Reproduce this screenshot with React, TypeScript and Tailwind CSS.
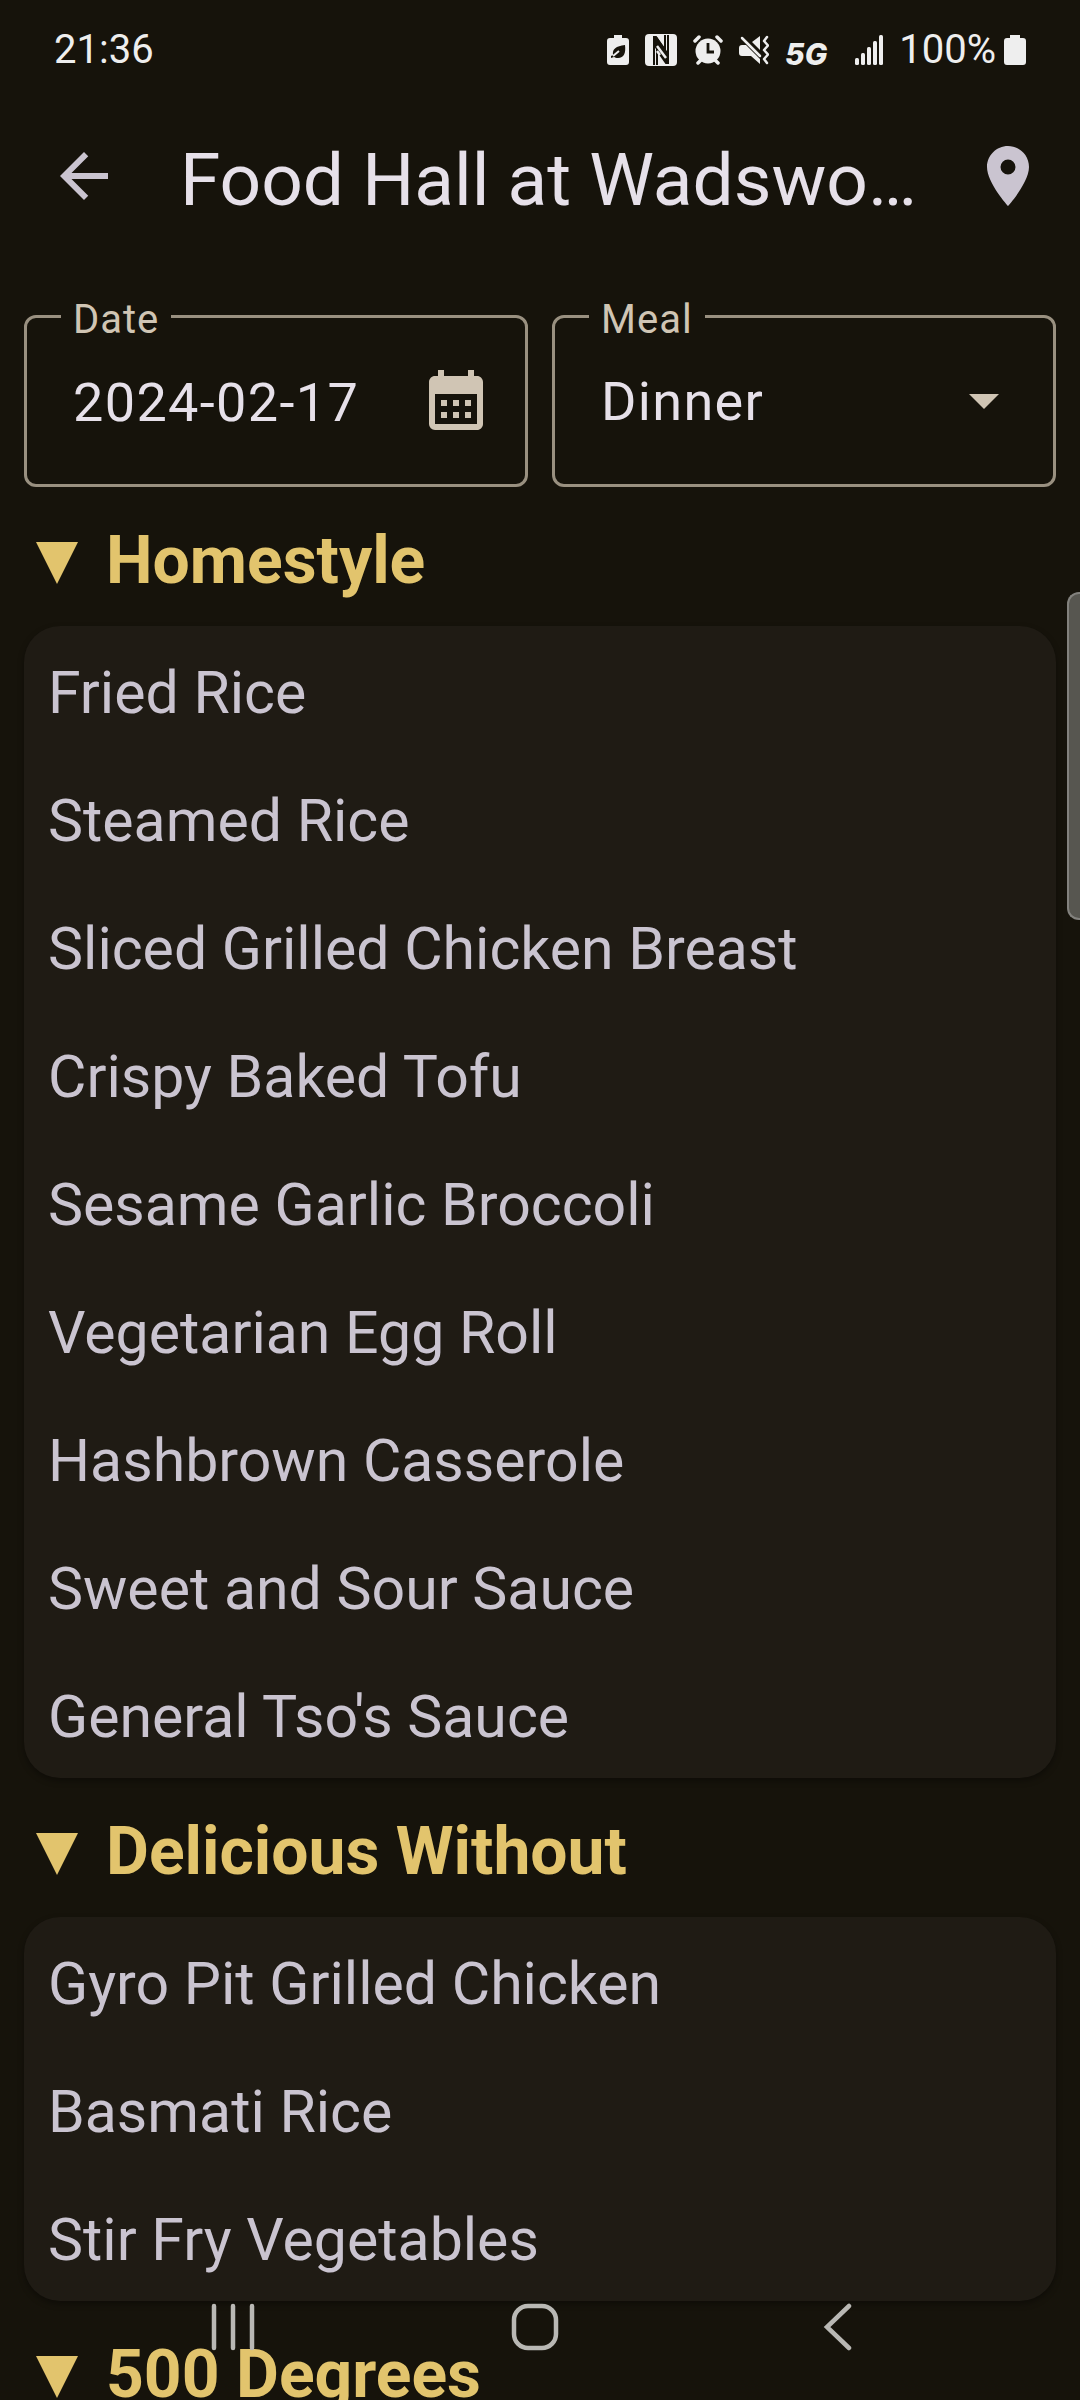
import { useState } from 'react';
import { MdArrowBack, MdArrowDropDown, MdCalendarMonth, MdPlace } from 'react-icons/md';

interface Station {
  name: string;
  items: string[];
}

const stations: Station[] = [
  {
    name: 'Homestyle',
    items: [
      'Fried Rice',
      'Steamed Rice',
      'Sliced Grilled Chicken Breast',
      'Crispy Baked Tofu',
      'Sesame Garlic Broccoli',
      'Vegetarian Egg Roll',
      'Hashbrown Casserole',
      'Sweet and Sour Sauce',
      "General Tso's Sauce",
    ],
  },
  {
    name: 'Delicious Without',
    items: ['Gyro Pit Grilled Chicken', 'Basmati Rice', 'Stir Fry Vegetables'],
  },
  { name: '500 Degrees', items: [] },
];

function StatusBar() {
  return (
    <div className="h-20 shrink-0 flex items-center justify-between pt-5 pl-[54px] pr-[54px] text-[40px] leading-[60px] text-[#eeeeee]">
      <span>21:36</span>
      <div className="flex items-center gap-4">
        {/* Battery saver */}
        <svg width="22" height="32" viewBox="0 0 22 32" fill="currentColor">
          <path d="M7 1h8v3h4a3 3 0 0 1 3 3v21a3 3 0 0 1-3 3H3a3 3 0 0 1-3-3V7a3 3 0 0 1 3-3h4z" />
          <path d="M18 11c1 8-1 13-7 13-2 0-3-.500-4-1l-3 1v-2l2-1c-1-6 3-9 12-10z" fill="#16130b" />
          <path d="M6 22l6-5" stroke="currentColor" strokeWidth="2" />
        </svg>
        {/* NFC */}
        <svg width="32" height="32" viewBox="0 0 32 32" fill="currentColor">
          <rect x="0" y="0" width="32" height="32" rx="4" />
          <path d="M9 31V3h2l9 13V1M23 1v28h-2l-9-13v15" fill="none" stroke="#16130b" strokeWidth="2" />
          <path d="M8 3h4l12 17v9h-3L8 11z" fill="#16130b" />
          <path d="M12 12l9 12M12 17l3 4" stroke="currentColor" strokeWidth="2.500" />
        </svg>
        {/* Alarm */}
        <svg width="30" height="30" viewBox="0 0 30 30" fill="currentColor">
          <circle cx="15" cy="16" r="12.500" />
          <path d="M2 6l4-4M28 6l-4-4M5 28l4-4M25 28l-4-4" stroke="currentColor" strokeWidth="3.500" strokeLinecap="round" />
          <path d="M15 8v9h6" fill="none" stroke="#16130b" strokeWidth="2.800" />
        </svg>
        {/* Muted, vibrate */}
        <svg width="30" height="30" viewBox="0 0 30 30" fill="currentColor">
          <path d="M3 10h4l14 14v5l-9-8H3a3 3 0 0 1-3-3v-5a3 3 0 0 1 3-3zM13 7l8-6v14z" />
          <path d="M3 3l18 18" stroke="currentColor" strokeWidth="2.500" strokeLinecap="round" />
          <path d="M28 2l-3 4 4 4.500-4 4.500 4 4.500-4 4.500 3 4" fill="none" stroke="currentColor" strokeWidth="2.500" strokeLinecap="round" strokeLinejoin="round" />
        </svg>
        <span className="pt-2 font-[Inter,sans-serif] text-[30px] leading-8 font-extrabold italic">5G</span>
        {/* Signal */}
        <svg className="ml-3" width="28" height="30" viewBox="0 0 28 30" fill="currentColor">
          <rect x="0" y="23" width="4" height="7" rx="1.500" />
          <rect x="6" y="18" width="4" height="12" rx="1.500" />
          <rect x="12" y="12" width="4" height="18" rx="1.500" />
          <rect x="18" y="6" width="4" height="24" rx="1.500" />
          <rect x="24" y="0" width="4" height="30" rx="1.500" />
        </svg>
        <div className="flex items-center gap-2">
          <span>100%</span>
          <svg width="22" height="32" viewBox="0 0 22 32" fill="currentColor">
            <path d="M6 1h10v3h3a3 3 0 0 1 3 3v21a3 3 0 0 1-3 3H3a3 3 0 0 1-3-3V7a3 3 0 0 1 3-3h3z" />
          </svg>
        </div>
      </div>
    </div>
  );
}

function StationSection({ station }: { station: Station }) {
  const [open, setOpen] = useState(true);

  return (
    <section>
      <h2>
        <button
          type="button"
          aria-expanded={open}
          onClick={() => setOpen(!open)}
          className="w-full h-[139px] flex items-center gap-7 pt-2 px-3 text-left text-[66px] leading-[78px] font-bold text-[#e2c46d]"
        >
          <svg className="mt-1" width="42" height="42" viewBox="0 0 42 42" fill="currentColor">
            <path d={open ? 'M0 0h42L21 42z' : 'M0 0v42l42-21z'} />
          </svg>
          {station.name}
        </button>
      </h2>
      {open && station.items.length > 0 && (
        <ul className="rounded-[36px] bg-[#1f1b14] shadow-[0_3px_6px_rgba(0,0,0,0.35)]">
          {station.items.map((item) => (
            <li key={item} className="h-32 flex items-center px-6 pt-1.5 text-[59px] leading-[72px] text-[#cac4d0]">
              {item}
            </li>
          ))}
        </ul>
      )}
    </section>
  );
}

export default function App() {
  const [date, setDate] = useState('2024-02-17');
  const [meal, setMeal] = useState('Dinner');

  return (
    <div className="relative h-screen overflow-hidden flex flex-col bg-[#16130b] font-[Roboto,sans-serif]">
      <StatusBar />

      <header className="h-48 shrink-0 flex items-center pl-3 text-[#cac4d0]">
        <button type="button" aria-label="Back" className="size-36 shrink-0 flex items-center justify-center">
          <MdArrowBack size={72} />
        </button>
        <h1 className="flex-1 min-w-0 truncate pl-6 pt-2 text-[73px] leading-[88px] text-[#e6e0e9]">
          Food Hall at Wadsworth
        </h1>
        <button type="button" aria-label="Show on map" className="size-36 shrink-0 flex items-center justify-center">
          <MdPlace size={72} />
        </button>
      </header>

      <main className="flex-1 min-h-0 overflow-y-auto [scrollbar-width:none] px-6 pt-5">
        <div className="grid grid-cols-2 gap-6">
          <fieldset className="min-w-0 rounded-xl border-3 border-[#999080] pl-[46px] pr-[33px] pb-12">
            <legend className="-ml-3 px-3 pt-2 text-[40px] leading-10 tracking-wide text-[#d0c5b4]">
              <label htmlFor="date">Date</label>
            </legend>
            <div className="flex items-center pt-6">
              <input
                id="date"
                type="text"
                value={date}
                onChange={(e) => setDate(e.target.value)}
                className="flex-1 min-w-0 h-[72px] bg-transparent pt-1 text-[54px] leading-[68px] tracking-wide text-[#e6e0e9] outline-none"
              />
              <button type="button" aria-label="Pick a date" className="text-[#d0c5b4]">
                <MdCalendarMonth size={72} />
              </button>
            </div>
          </fieldset>

          <fieldset className="min-w-0 rounded-xl border-3 border-[#999080] pl-[46px] pr-[33px] pb-12">
            <legend className="-ml-3 px-3 pt-2 text-[40px] leading-10 tracking-wide text-[#d0c5b4]">
              <label htmlFor="meal">Meal</label>
            </legend>
            <div className="flex items-center pt-6">
              <select
                id="meal"
                value={meal}
                onChange={(e) => setMeal(e.target.value)}
                className="flex-1 min-w-0 h-[72px] appearance-none bg-transparent pt-1 text-[54px] leading-[68px] tracking-wide text-[#e6e0e9] outline-none"
              >
                <option>Breakfast</option>
                <option>Lunch</option>
                <option>Dinner</option>
              </select>
              <MdArrowDropDown size={72} className="text-[#d0c5b4] pointer-events-none" />
            </div>
          </fieldset>
        </div>

        {stations.map((station) => (
          <StationSection key={station.name} station={station} />
        ))}
      </main>

      {/* Edge panel handle */}
      <div className="absolute right-0 top-[592px] w-[13px] h-[328px] rounded-l-xl border-2 border-r-0 border-[#83827e] bg-[#575650]" />

      {/* System navigation, drawn over the list */}
      <nav className="absolute inset-x-0 bottom-0 h-[146px] grid grid-cols-3 pl-[82px] pr-[92px] text-[#b9b8b4]">
        <button type="button" aria-label="Recent apps" className="flex items-center justify-center">
          <svg width="48" height="48" viewBox="0 0 48 48" fill="none" stroke="currentColor" strokeWidth="4.500" strokeLinecap="round">
            <path d="M5 3v42M24 3v42M43 3v42" />
          </svg>
        </button>
        <button type="button" aria-label="Home" className="flex items-center justify-center">
          <svg width="48" height="48" viewBox="0 0 48 48" fill="none" stroke="currentColor" strokeWidth="4.500">
            <rect x="3" y="3" width="42" height="42" rx="14" />
          </svg>
        </button>
        <button type="button" aria-label="Back" className="flex items-center justify-center">
          <svg width="48" height="48" viewBox="0 0 48 48" fill="none" stroke="currentColor" strokeWidth="4.500" strokeLinecap="round">
            <path d="M36 3L14 24l22 21" />
          </svg>
        </button>
      </nav>
    </div>
  );
}
